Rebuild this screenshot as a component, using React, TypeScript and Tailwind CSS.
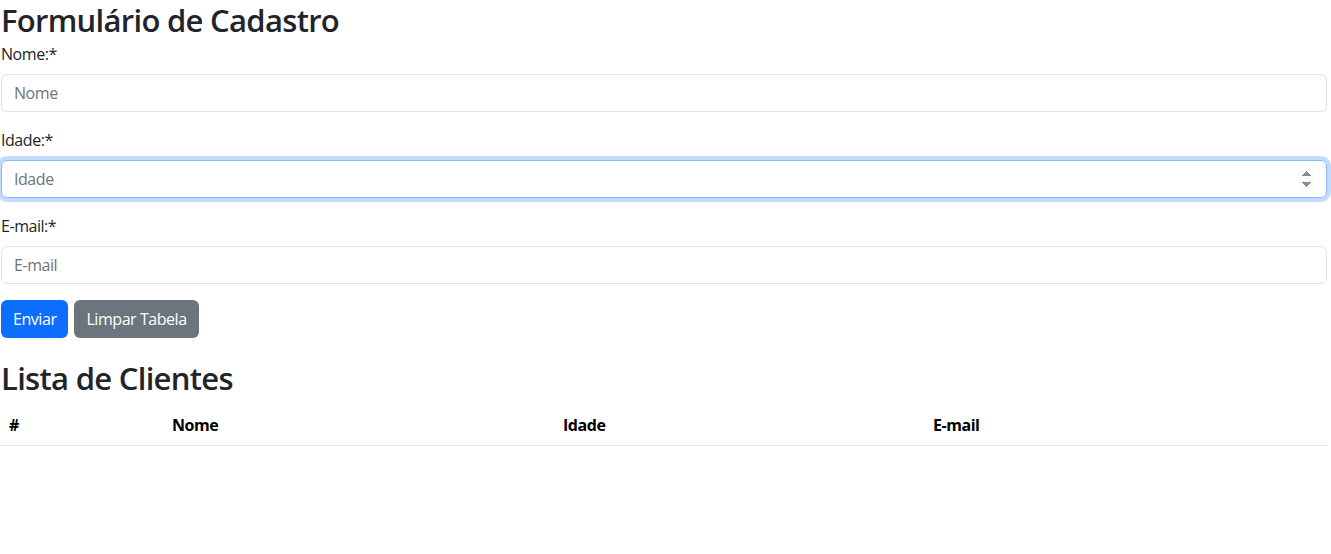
import React from 'react';

export default function App() {
  const columns = [
    { label: '#', width: 'w-[163px]' },
    { label: 'Nome', width: 'w-[391px]' },
    { label: 'Idade', width: 'w-[370px]' },
    { label: 'E-mail', width: 'w-[402px]' },
  ];

  return (
    <div className="min-h-screen bg-white text-[#212529] font-['Open_Sans',sans-serif] tracking-[-0.45px]">
      <div className="ml-px w-[1326px]">
        {/* Formulário */}
        <h2 className="h-[42px] pt-px text-[31px] leading-[38px] font-semibold tracking-[-0.7px]">Formulário de Cadastro</h2>
        <form onSubmit={(e) => e.preventDefault()}>
          <div className="mb-4">
            <label className="block text-base leading-6 mb-2">Nome:*</label>
            <input
              type="text"
              placeholder="Nome"
              className="block w-full h-[38px] px-3 rounded-md border border-[#dee2e6] text-base placeholder:text-[#6c757d] outline-none"
            />
          </div>
          <div className="mb-4">
            <label className="block text-base leading-6 mb-2">Idade:*</label>
            <input
              type="number"
              placeholder="Idade"
              autoFocus
              className="block w-full h-[38px] px-3 rounded-md border border-[#86b7fe] shadow-[0_0_0_4px_rgba(13,110,253,0.25)] text-base placeholder:text-[#6c757d] outline-none"
            />
          </div>
          <div className="mb-4">
            <label className="block text-base leading-6 mb-2">E-mail:*</label>
            <input
              type="email"
              placeholder="E-mail"
              className="block w-full h-[38px] px-3 rounded-md border border-[#dee2e6] text-base placeholder:text-[#6c757d] outline-none"
            />
          </div>
          <div className="flex gap-[6px]">
            <button type="submit" className="h-[38px] px-3 rounded-md bg-[#0d6efd] text-white text-base">
              Enviar
            </button>
            <button type="button" className="h-[38px] px-3 rounded-md bg-[#6c757d] text-white text-base">
              Limpar Tabela
            </button>
          </div>
        </form>

        {/* Lista */}
        <h2 className="mt-[21px] mb-2 text-[31px] leading-[38px] font-semibold tracking-[-0.7px]">Lista de Clientes</h2>
        <table className="w-full border-collapse text-black">
          <thead>
            <tr className="border-b border-[#dee2e6]">
              {columns.map((col) => (
                <th key={col.label} className={`${col.width} p-2 text-left text-base leading-6 font-bold`}>
                  {col.label}
                </th>
              ))}
            </tr>
          </thead>
          <tbody></tbody>
        </table>
      </div>
    </div>
  );
}
